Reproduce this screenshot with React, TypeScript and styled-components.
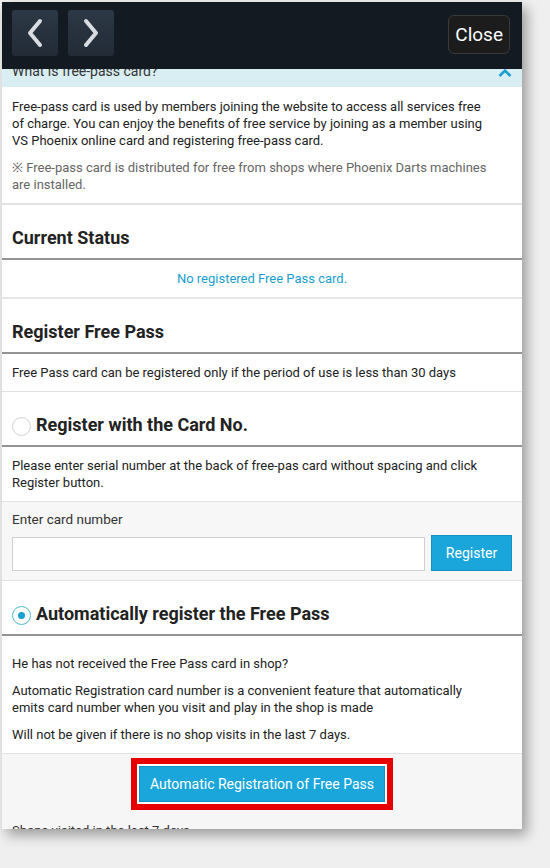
import React, { useState } from "react";
import styled, { createGlobalStyle } from "styled-components";

const GlobalStyle = createGlobalStyle`
  html, body {
    margin: 0;
    padding: 0;
    background: #efefef;
  }
  body {
    font-family: Roboto, "Liberation Sans", Arial, sans-serif;
    color: #222;
  }
`;

const Page = styled.div`
  width: 550px;
  height: 868px;
  padding: 2px 0 0 2px;
  box-sizing: border-box;
  overflow: hidden;
`;

const Screen = styled.div`
  position: relative;
  width: 520px;
  height: 827px;
  background: #fff;
  overflow: hidden;
  box-shadow: 5px 6px 12px rgba(0, 0, 0, 0.35);
`;

const TopBar = styled.div`
  position: absolute;
  top: 0;
  left: 0;
  right: 0;
  height: 67px;
  background: #131a22;
  display: flex;
  align-items: flex-start;
  padding: 8px 12px 0 10px;
  box-sizing: border-box;
  gap: 10px;
  z-index: 2;
`;

const NavButton = styled.button`
  width: 46px;
  height: 46px;
  border: none;
  border-radius: 3px;
  background: linear-gradient(#2d3846, #222b36);
  display: flex;
  align-items: center;
  justify-content: center;
  padding: 0;
`;

const CloseButton = styled.button`
  margin-left: auto;
  margin-top: 5px;
  height: 39px;
  padding: 0 6px;
  border: 1px solid #3a3a3a;
  border-radius: 6px;
  background: #1c1c1c;
  color: #fff;
  font-family: Roboto, "Liberation Sans", sans-serif;
  font-size: 19px;
`;

const Content = styled.div`
  padding-top: 49px;
`;

const Band = styled.div`
  height: 36px;
  background: #d8eef2;
  display: flex;
  align-items: flex-end;
  justify-content: space-between;
  padding: 0 10px 7px 10px;
  box-sizing: border-box;
  font-size: 14px;
  line-height: 17px;
  color: #333;
`;

const Intro = styled.div`
  padding: 11px 30px 10px 10px;
  border-bottom: 2px solid #e2e2e2;
`;

const Para = styled.p<{ $muted?: boolean }>`
  margin: 0 0 10px;
  font-size: 13px;
  line-height: 17px;
  color: ${(p) => (p.$muted ? "#666" : "#222")};
  &:last-child {
    margin-bottom: 0;
  }
`;

const Heading = styled.h2`
  margin: 0;
  padding: 22px 10px 9px;
  font-size: 18px;
  line-height: 22px;
  font-weight: 700;
  color: #222;
  border-bottom: 2px solid #949494;
  display: flex;
  align-items: center;
  gap: 5px;
`;

const Radio = styled.span<{ $checked?: boolean }>`
  width: 17px;
  height: 17px;
  border-radius: 50%;
  border: 1px solid ${(p) => (p.$checked ? "#4fb9cf" : "#d2d2d2")};
  background: #fff;
  display: inline-flex;
  align-items: center;
  justify-content: center;
  margin-top: 3px;
  flex-shrink: 0;
  &::after {
    content: "";
    width: 7px;
    height: 7px;
    border-radius: 50%;
    background: ${(p) => (p.$checked ? "#1a9fd3" : "transparent")};
  }
`;

const StatusRow = styled.div`
  padding: 10px;
  text-align: center;
  font-size: 13px;
  line-height: 17px;
  color: #1aa0d0;
  border-bottom: 2px solid #e6e6e6;
`;

const TextRow = styled.div<{ $pad?: string }>`
  padding: ${(p) => p.$pad || "10px 30px 10px 10px"};
  font-size: 13px;
  line-height: 17px;
  color: #222;
  border-bottom: 1px solid #e2e2e2;
`;

const FormArea = styled.div`
  background: #f7f7f7;
  padding: 9px 10px 9px;
  border-bottom: 1px solid #e2e2e2;
`;

const Label = styled.div`
  font-size: 13.5px;
  line-height: 16px;
  color: #333;
  margin-bottom: 8px;
`;

const InputRow = styled.div`
  display: flex;
  align-items: flex-end;
  gap: 6px;
`;

const CardInput = styled.input`
  flex: 1;
  height: 34px;
  box-sizing: border-box;
  border: 1px solid #cfcfcf;
  background: #fff;
  padding: 0 8px;
  font-size: 14px;
`;

const BlueButton = styled.button<{ $wide?: boolean }>`
  height: 36px;
  padding: 0 ${(p) => (p.$wide ? "10px" : "12px")};
  min-width: ${(p) => (p.$wide ? "239px" : "81px")};
  border: 1px solid #1391c2;
  background: #1aa6db;
  color: #fff;
  font-family: Roboto, "Liberation Sans", sans-serif;
  font-size: 14px;
`;

const ButtonArea = styled.div`
  background: #f6f6f6;
  padding: 4px 0 0;
  display: flex;
  flex-direction: column;
  align-items: center;
`;

const Highlight = styled.div`
  border: 6px solid #e60000;
  padding: 2px;
  background: #fff;
  display: flex;
`;

const CutText = styled.div`
  align-self: stretch;
  padding: 12px 10px 0;
  font-size: 13px;
  line-height: 17px;
  color: #333;
`;

const Chevron = ({ dir }: { dir: "left" | "right" }) => (
  <svg width="22" height="32" viewBox="0 0 22 32">
    <path
      d={dir === "left" ? "M16 4 L6 16 L16 28" : "M6 4 L16 16 L6 28"}
      fill="none"
      stroke="#d9dde2"
      strokeWidth="4"
      strokeLinecap="round"
      strokeLinejoin="round"
    />
  </svg>
);

const UpArrow = () => (
  <svg width="14" height="9" viewBox="0 0 14 9" style={{ marginBottom: 3 }}>
    <path d="M1.5 8 L7 2.5 L12.5 8" fill="none" stroke="#1a9fd3" strokeWidth="2.6" />
  </svg>
);

export default function App() {
  const [mode, setMode] = useState<"card" | "auto">("auto");
  const [cardNo, setCardNo] = useState("");

  return (
    <Page>
      <GlobalStyle />
      <Screen>
        <TopBar>
          <NavButton aria-label="Back">
            <Chevron dir="left" />
          </NavButton>
          <NavButton aria-label="Forward">
            <Chevron dir="right" />
          </NavButton>
          <CloseButton>Close</CloseButton>
        </TopBar>
        <Content>
          <Band>
            <span>What is free-pass card?</span>
            <UpArrow />
          </Band>
          <Intro>
            <Para>
              Free-pass card is used by members joining the website to access all services free
              of charge. You can enjoy the benefits of free service by joining as a member using
              VS Phoenix online card and registering free-pass card.
            </Para>
            <Para $muted>
              ※ Free-pass card is distributed for free from shops where Phoenix Darts machines
              are installed.
            </Para>
          </Intro>

          <Heading>Current Status</Heading>
          <StatusRow>No registered Free Pass card.</StatusRow>

          <Heading>Register Free Pass</Heading>
          <TextRow>Free Pass card can be registered only if the period of use is less than 30 days</TextRow>

          <Heading onClick={() => setMode("card")}>
            <Radio $checked={mode === "card"} />
            Register with the Card No.
          </Heading>
          <TextRow>
            Please enter serial number at the back of free-pas card without spacing and click
            Register button.
          </TextRow>
          <FormArea>
            <Label>Enter card number</Label>
            <InputRow>
              <CardInput value={cardNo} onChange={(e) => setCardNo(e.target.value)} />
              <BlueButton>Register</BlueButton>
            </InputRow>
          </FormArea>

          <Heading onClick={() => setMode("auto")}>
            <Radio $checked={mode === "auto"} />
            Automatically register the Free Pass
          </Heading>
          <TextRow $pad="19px 30px 10px 10px">
            <Para>He has not received the Free Pass card in shop?</Para>
            <Para>
              Automatic Registration card number is a convenient feature that automatically
              emits card number when you visit and play in the shop is made
            </Para>
            <Para>Will not be given if there is no shop visits in the last 7 days.</Para>
          </TextRow>
          <ButtonArea>
            <Highlight>
              <BlueButton $wide>Automatic Registration of Free Pass</BlueButton>
            </Highlight>
            <CutText>Shops visited in the last 7 days</CutText>
          </ButtonArea>
        </Content>
      </Screen>
    </Page>
  );
}
